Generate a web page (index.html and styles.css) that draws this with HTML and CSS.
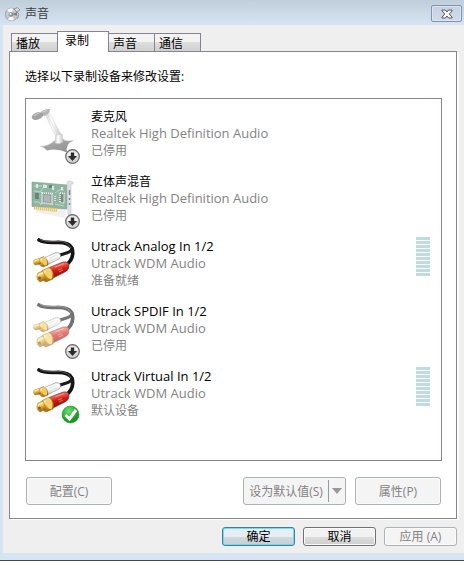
FILE: index.html
```
<!DOCTYPE html>
<html lang="zh-CN">
<head>
    <meta charset="UTF-8">
    <meta name="viewport" content="width=device-width, initial-scale=1.0">
    <title>声音</title>
    <link rel="stylesheet" href="styles.css">
</head>
<body>
    <!-- Shared icon parts -->
    <svg class="defs" aria-hidden="true">
        <defs>
            <linearGradient id="gold" x1="0" y1="0" x2="0.4" y2="1">
                <stop offset="0" stop-color="#c58f26"/>
                <stop offset="0.35" stop-color="#fff0a0"/>
                <stop offset="0.6" stop-color="#e6b13a"/>
                <stop offset="1" stop-color="#9a6412"/>
            </linearGradient>
            <linearGradient id="silver" x1="0" y1="0" x2="0.3" y2="1">
                <stop offset="0" stop-color="#a9aeb3"/>
                <stop offset="0.35" stop-color="#ffffff"/>
                <stop offset="0.75" stop-color="#eceef0"/>
                <stop offset="1" stop-color="#9fa6ac"/>
            </linearGradient>
            <linearGradient id="red" x1="0" y1="0" x2="0.3" y2="1">
                <stop offset="0" stop-color="#a8140e"/>
                <stop offset="0.3" stop-color="#ee6a5b"/>
                <stop offset="0.55" stop-color="#cf1f16"/>
                <stop offset="1" stop-color="#860a05"/>
            </linearGradient>
            <linearGradient id="metal" x1="0" y1="0" x2="1" y2="0">
                <stop offset="0" stop-color="#d2d2d2"/>
                <stop offset="0.4" stop-color="#ffffff"/>
                <stop offset="1" stop-color="#c4c4c4"/>
            </linearGradient>
            <linearGradient id="base" x1="0" y1="0" x2="1" y2="1">
                <stop offset="0" stop-color="#b4b4b4"/>
                <stop offset="1" stop-color="#8a8a8a"/>
            </linearGradient>
            <radialGradient id="ok" cx="0.4" cy="0.3" r="0.8">
                <stop offset="0" stop-color="#6fe070"/>
                <stop offset="0.6" stop-color="#22a62b"/>
                <stop offset="1" stop-color="#0b7a17"/>
            </radialGradient>
        </defs>
        <symbol id="cable" viewBox="0 0 50 56">
            <path d="M8 2 C13 5 18 4.500 24 4.500 C31 4 38 4.500 41 10 C43 17 41 23 34 28" fill="none" stroke="#151515" stroke-width="3.600" stroke-linecap="round"/>
            <path d="M41 11 C39 16 33 14.500 27 18" fill="none" stroke="#1c1c1c" stroke-width="3.200"/>
            <path d="M9 1.500 C15 4 20 3.400 27 3.400 C34 3.400 38 6 40 10" fill="none" stroke="#777" stroke-width="0.700"/>
            <path d="M14 19.500 L25 14.500 Q30 14.500 29.500 19 L28 21 L16 27 Z" fill="url(#silver)" stroke="#8b9095" stroke-width="0.600"/>
            <path d="M18 20.500 L26 17 M17 24 L27 19.500" stroke="#d5d9dc" stroke-width="0.700"/>
            <path d="M8 20.500 L13 18.500 Q18 22 17 27 L12 29 Q7 28 8 20.500 Z" fill="url(#gold)" stroke="#9b6a17" stroke-width="0.500"/>
            <path d="M3 22 L8 20.500 L10 26 L4 27 Q1.500 25 3 22 Z" fill="url(#gold)" stroke="#a3731f" stroke-width="0.400"/>
            <ellipse cx="13.500" cy="23.500" rx="2.200" ry="4" transform="rotate(-20 13.500 23.500)" fill="#f2cc63"/>
            <path d="M18 29.500 L32 24 Q38 23 38 28 Q38 32 34 34 L21 40.500 Z" fill="url(#red)" stroke="#7d100b" stroke-width="0.500"/>
            <path d="M24 29 L33 25.500" stroke="#f0988c" stroke-width="1"/>
            <path d="M27 32 L31 30.500 M28 34 L32 32" stroke="#f0a79e" stroke-width="0.600"/>
            <path d="M11 32.500 L18 29.500 Q24 34 22 41 L15 44 Q9 42 11 32.500 Z" fill="url(#gold)" stroke="#94620f" stroke-width="0.500"/>
            <path d="M7 35 L12 33 L15 41 L9 44 Q4 41 7 35 Z" fill="url(#gold)" stroke="#94620f" stroke-width="0.500"/>
            <ellipse cx="18" cy="36" rx="2.800" ry="5.500" transform="rotate(-20 18 36)" fill="#f5d170"/>
            <circle cx="8.500" cy="40" r="1.500" fill="#8f6018"/>
        </symbol>
        <symbol id="mic" viewBox="0 0 50 56">
            <path d="M9.500 38.500 Q18 38 23 33 L32 31.500 Q36 34 42.500 32.500 Q34 36 36 44.500 Q26 40 16 42.500 Q13 39 9.500 38.500 Z" fill="url(#base)"/>
            <path d="M9.500 38.500 Q18 38 23 33 L32 31.500 Q36 34 42.500 32.500" fill="none" stroke="#cacaca" stroke-width="0.700"/>
            <path d="M14 6 L18 4 L31 28 L25 29 Z" fill="url(#metal)" stroke="#dadada" stroke-width="0.600"/>
            <path d="M17 8 L27 28" stroke="#dddddd" stroke-width="0.700"/>
            <path d="M25 27 L31 26 L32 34 Q28 37 24 35 Z" fill="url(#metal)" stroke="#c2c2c2" stroke-width="0.600"/>
            <path d="M10 4 Q15 0.500 19 1.500 Q18 6 13 8 Z" fill="#b7b7b7" stroke="#a5a5a5" stroke-width="0.500"/>
            <ellipse cx="6.500" cy="8" rx="6" ry="3.600" transform="rotate(-22 6.500 8)" fill="#a2a2a2"/>
            <path d="M3 8 Q8 4 16 2.500" fill="none" stroke="#cccccc" stroke-width="1.200"/>
        </symbol>
        <symbol id="card" viewBox="0 0 50 56">
            <path d="M5 39 L34 45 L35 35 L5 34 Z" fill="#eeeeee"/>
            <path d="M1 9 L36 12 L36 36 L1 33.500 Z" fill="#83ad98" stroke="#6c9481" stroke-width="0.600"/>
            <path d="M3 33.500 L26 35 L26 39 L3 36.500 Z" fill="#e0bc63"/>
            <path d="M4 35.500 L26 37.500" stroke="#fff0bc" stroke-width="3" stroke-dasharray="0.700 1.300"/>
            <path d="M3 13 H11 M3 18 L9 19 L12 15 M3 29 H8 L10 32 M24 20 L28 17 H33 M24 31 L33 33 M4 23 H9" fill="none" stroke="#c4ddd0" stroke-width="0.800"/>
            <path d="M6 11 V15 M13 11.500 V15 M15 12 V15 M22 13 V17 M31 14 V17" stroke="#eef7f0" stroke-width="1.600"/>
            <path d="M4 20 H8 V26 H4 Z M18 12 H21 V15 H18 Z" fill="#577b6c"/>
            <path d="M11 20 L21 20.500 V31 L11 30 Z" fill="#8d9592" stroke="#f2f5f3" stroke-width="1.800" stroke-dasharray="1 1"/>
            <path d="M13 22 L19 22.500 V29 L13 28.500 Z" fill="#a9b0ad"/>
            <path d="M29 20 L33 20.500 V30 L29 29.500 Z" fill="#6d7f77" stroke="#f2f5f3" stroke-width="1.600" stroke-dasharray="1 1"/>
            <path d="M24 23 V28" stroke="#f3f3f3" stroke-width="1.400" stroke-dasharray="1 1"/>
            <path d="M36 9 L38 8 L42 9 V11 L40 11 V43 L37 42 Z" fill="#dcdfe3" stroke="#bcc0c6" stroke-width="0.600"/>
            <path d="M38.500 17 V22 M38.500 25 V27 M38.500 30 V32" stroke="#73777b" stroke-width="1.400"/>
        </symbol>
        <symbol id="badge-off" viewBox="0 0 50 56">
            <circle cx="41.500" cy="48.500" r="6.800" fill="#d6d6d6" stroke="#6a6a6a" stroke-width="1.200"/>
            <path d="M35.800 48 A5.800 5.800 0 0 1 47.200 48 Z" fill="#f0f0f0"/>
            <path d="M39.800 44.500 H43.200 V48 H46 L41.500 53 L37 48 H39.800 Z" fill="#2c2c2c"/>
        </symbol>
        <symbol id="badge-ok" viewBox="0 0 50 56">
            <circle cx="39.500" cy="46.500" r="8.500" fill="url(#ok)" stroke="#2c9138" stroke-width="0.600"/>
            <path d="M34.500 47 L38.500 51 L45 42" fill="none" stroke="#fff" stroke-width="3"/>
        </symbol>
    </svg>

    <div class="window">
        <header class="titlebar">
            <svg class="title-icon" viewBox="0 0 16 16" aria-hidden="true">
                <circle cx="6.500" cy="8.500" r="6.300" fill="#c5c9cd" stroke="#949ba2" stroke-width="0.800"/>
                <path d="M6.500 8.500 L2 4 A6.300 6.300 0 0 1 8 2.500 Z" fill="#f4f6f7"/>
                <path d="M6.500 8.500 L3 13.500 A6.300 6.300 0 0 0 9 14 Z" fill="#f8f8f8"/>
                <path d="M6.500 8.500 L12 6 L12.500 10 Z" fill="#7c8389"/>
                <circle cx="6" cy="8.500" r="2.400" fill="#8b9299"/>
                <circle cx="5.500" cy="8" r="1.100" fill="#f2f4f5"/>
                <path d="M9 3 L12.500 1.500 L15 4 L12 6 Z M12 6 L14 8 L12.500 13" fill="#d7dade" stroke="#80878e" stroke-width="0.800"/>
            </svg>
            <h1 class="title">声音</h1>
            <button class="close" type="button" aria-label="关闭">
                <svg viewBox="0 0 12 10" aria-hidden="true">
                    <path d="M1 1 H4.500 L6 3 L7.500 1 H11 V2 L8.200 5 L11 8 V9 H7.500 L6 7 L4.500 9 H1 V8 L3.800 5 L1 2 Z" fill="#f7f7f7" stroke="#52586a" stroke-width="1"/>
                </svg>
            </button>
        </header>

        <main class="dialog">
            <div class="tabs" role="tablist">
                <button class="tab" type="button" role="tab" aria-selected="false">播放</button>
                <button class="tab active" type="button" role="tab" aria-selected="true">录制</button>
                <button class="tab" type="button" role="tab" aria-selected="false">声音</button>
                <button class="tab" type="button" role="tab" aria-selected="false">通信</button>
            </div>

            <section class="panel" role="tabpanel" aria-label="录制">
                <p class="hint">选择以下录制设备来修改设置:</p>

                <ul class="devices">
                    <li class="device">
                        <svg class="device-icon" viewBox="0 0 50 56" aria-hidden="true"><use href="#mic"/><use href="#badge-off"/></svg>
                        <div class="device-text">
                            <div class="device-name">麦克风</div>
                            <div class="driver">Realtek High Definition Audio</div>
                            <div>已停用</div>
                        </div>
                    </li>
                    <li class="device">
                        <svg class="device-icon" viewBox="0 0 50 56" aria-hidden="true"><use class="pale" href="#card"/><use href="#badge-off"/></svg>
                        <div class="device-text">
                            <div class="device-name">立体声混音</div>
                            <div class="driver">Realtek High Definition Audio</div>
                            <div>已停用</div>
                        </div>
                    </li>
                    <li class="device">
                        <svg class="device-icon" viewBox="0 0 50 56" aria-hidden="true"><use href="#cable"/></svg>
                        <div class="device-text">
                            <div class="device-name latin">Utrack Analog In 1/2</div>
                            <div class="driver">Utrack WDM Audio</div>
                            <div>准备就绪</div>
                        </div>
                        <div class="level"></div>
                    </li>
                    <li class="device">
                        <svg class="device-icon" viewBox="0 0 50 56" aria-hidden="true"><use class="faded" href="#cable"/><use href="#badge-off"/></svg>
                        <div class="device-text">
                            <div class="device-name latin">Utrack SPDIF In 1/2</div>
                            <div class="driver">Utrack WDM Audio</div>
                            <div>已停用</div>
                        </div>
                    </li>
                    <li class="device">
                        <svg class="device-icon" viewBox="0 0 50 56" aria-hidden="true"><use href="#cable"/><use href="#badge-ok"/></svg>
                        <div class="device-text">
                            <div class="device-name latin">Utrack Virtual In 1/2</div>
                            <div class="driver">Utrack WDM Audio</div>
                            <div>默认设备</div>
                        </div>
                        <div class="level"></div>
                    </li>
                </ul>

                <div class="actions">
                    <button class="btn action" type="button" disabled>配置(C)</button>
                    <div class="split">
                        <button class="split-main" type="button" disabled>设为默认值(S)</button>
                        <button class="split-arrow" type="button" aria-label="更多选项" disabled></button>
                    </div>
                    <button class="btn action" type="button" disabled>属性(P)</button>
                </div>
            </section>

            <footer class="footer">
                <button class="btn default" type="button">确定</button>
                <button class="btn" type="button">取消</button>
                <button class="btn" type="button" disabled>应用 (A)</button>
            </footer>
        </main>
    </div>
</body>
</html>
```

FILE: styles.css
```
:root {
    --frame: #d7e4f2;
    --face: #efefef;
    --line: #868491;
    --muted: #838383;
    --disabled-border: #adb2b5;
}

* {
    box-sizing: border-box;
}
body {
    margin: 0;
    font-family: "Open Sans", "Noto Sans CJK SC", sans-serif;
    font-size: 12px;
    line-height: 17px;
    color: #000;
}
button {
    font: inherit;
    color: inherit;
    padding: 0;
}
.defs {
    position: absolute;
    width: 0;
    height: 0;
}

/* Window frame */
.window {
    display: flex;
    flex-direction: column;
    min-height: 100vh;
    padding: 0 0 7px 3px;
    background: var(--frame);
    border-bottom: 1px solid #45484d;
}
.titlebar {
    display: flex;
    align-items: center;
    height: 25px;
    margin-left: -3px;
    padding: 2px 2px 0 5px;
    background: linear-gradient(#c0cddb, #d7e4f2);
}
.title-icon {
    width: 16px;
    height: 16px;
}
.title {
    flex: 1;
    margin: 0 0 0 4px;
    font-size: 12px;
    font-weight: normal;
    color: #3c3f44;
}
.close {
    display: flex;
    align-items: center;
    justify-content: center;
    width: 31px;
    height: 17px;
    border: 1px solid #8592ad;
    border-radius: 2px;
    background: linear-gradient(#c5d1e0, #d0dcea);
    box-shadow: inset 0 0 0 1px #dce5ef;
}
.close svg {
    width: 12px;
    height: 10px;
}

/* Tabs */
.dialog {
    flex: 1;
    display: flex;
    flex-direction: column;
    padding: 6px 7px 7px 6px;
    background: var(--face);
}
.tabs {
    display: flex;
    align-items: flex-end;
    padding-left: 2px;
}
.tab {
    width: 46px;
    height: 18px;
    padding: 2px 0 0 4px;
    text-align: left;
    line-height: 16px;
    border: 1px solid var(--line);
    border-bottom: 0;
    border-left-width: 0;
    background: linear-gradient(#f3f3f3 50%, #dedede 50%, #d0d0d0);
}
.tab:first-child {
    width: 47px;
    border-left-width: 1px;
    border-right-width: 0;
}
.tab.active {
    z-index: 1;
    width: 52px;
    height: 21px;
    margin: 0 0 -1px -1px;
    padding: 0 0 2px 7px;
    border-left-width: 1px;
    background: #fff;
}
.panel {
    flex: 1;
    display: flex;
    flex-direction: column;
    padding: 16px 14px 13px 15px;
    border: 1px solid var(--line);
    background: #fff;
    box-shadow: 2px 1px 0 #fff;
}
.hint {
    margin: 0 0 13px;
}

/* Device list */
.devices {
    flex: 1;
    margin: 0;
    padding: 8px 11px 20px 5px;
    list-style: none;
    border: 1px solid var(--line);
}
.device {
    display: flex;
    align-items: flex-start;
    height: 65px;
}
.device-icon {
    width: 50px;
    height: 56px;
    margin-top: 1px;
}
.faded {
    opacity: 0.6;
}
.pale {
    opacity: 0.9;
}
.device-text {
    flex: 1;
    margin: 1px 0 0 10px;
    color: var(--muted);
}
.device-name {
    color: #000;
}
.latin,
.driver {
    font-size: 13px;
}
.level {
    width: 14px;
    height: 39px;
    background: repeating-linear-gradient(#bfdce2 0 3px, #fff 3px 4px);
}

/* Buttons */
.btn {
    width: 73px;
    height: 19px;
    border: 1px solid #707070;
    border-radius: 3px;
    background: linear-gradient(#f2f2f2 50%, #dddddd 50%, #cfcfcf);
    box-shadow: inset 0 0 0 1px #fafafa;
}
.btn:disabled {
    color: var(--muted);
    border-color: var(--disabled-border);
    background: #f4f4f4;
}
.btn.default {
    border-color: #3c7f9f;
    background: linear-gradient(#e6eef1 50%, #cfdade 50%, #c3d0d5);
    box-shadow: inset 0 0 0 1px #6fdcf2;
}
.btn.action {
    width: 86px;
    height: 28px;
}
.actions {
    display: flex;
    gap: 9px;
    margin-top: 16px;
    padding: 0 1px;
}
.split {
    display: flex;
    align-items: stretch;
    width: 103px;
    height: 28px;
    margin-left: auto;
    border: 1px solid var(--disabled-border);
    border-radius: 3px;
    background: #f4f4f4;
}
.split button {
    border: 0;
    background: none;
    color: var(--muted);
}
.split-main {
    flex: 1;
}
.split .split-arrow {
    width: 17px;
    margin: 2px 0;
    border-left: 1px solid #9a9a9a;
}
.split-arrow::before {
    content: "";
    display: block;
    width: 0;
    margin: 0 auto;
    border: 5px solid transparent;
    border-top: 6px solid #999;
    border-bottom: 0;
}
.footer {
    display: flex;
    justify-content: flex-end;
    gap: 8px;
    margin-top: 8px;
}
```
